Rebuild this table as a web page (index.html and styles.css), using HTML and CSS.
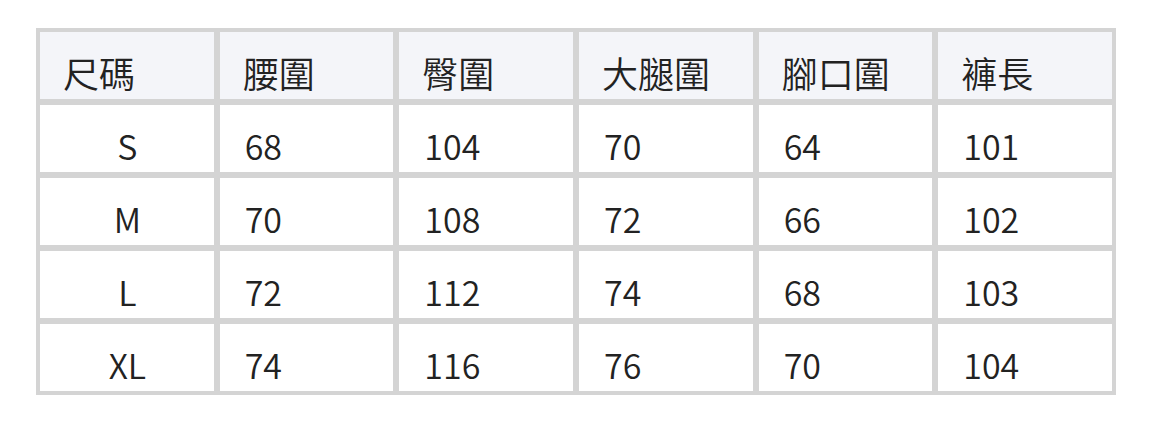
FILE: index.html
```html
<!DOCTYPE html>
<html lang="zh-Hant">
<head>
<meta charset="utf-8">
<link rel="stylesheet" href="styles.css">
</head>
<body>
<table class="size-table">
  <thead>
    <tr><th>尺碼</th><th>腰圍</th><th>臀圍</th><th>大腿圍</th><th>腳口圍</th><th>褲長</th></tr>
  </thead>
  <tbody>
    <tr><td class="size">S</td><td>68</td><td>104</td><td>70</td><td>64</td><td>101</td></tr>
    <tr><td class="size">M</td><td>70</td><td>108</td><td>72</td><td>66</td><td>102</td></tr>
    <tr><td class="size">L</td><td>72</td><td>112</td><td>74</td><td>68</td><td>103</td></tr>
    <tr><td class="size">XL</td><td>74</td><td>116</td><td>76</td><td>70</td><td>104</td></tr>
  </tbody>
</table>
</body>
</html>
```
FILE: styles.css
```css
html, body {
  margin: 0;
  padding: 0;
  background: #ffffff;
}
body {
  font-family: "Noto Sans CJK TC", "Noto Sans", sans-serif;
  color: #222222;
}
.size-table {
  margin: 28px 0 0 36px;
  width: 1080px;
  table-layout: fixed;
  border-collapse: separate;
  border-spacing: 0;
  border: 1px solid #d4d4d4;
}
.size-table th,
.size-table td {
  border: 3px solid #d4d4d4;
  font-weight: 350;
  line-height: 52px;
  text-align: left;
  vertical-align: bottom;
}
.size-table th {
  padding: 14px 23px 1px;
  font-size: 36px;
  background: #f4f5f9;
}
.size-table td {
  padding: 15px 24px 0 25px;
  font-size: 34px;
}
.size-table td.size {
  text-align: center;
}
```
